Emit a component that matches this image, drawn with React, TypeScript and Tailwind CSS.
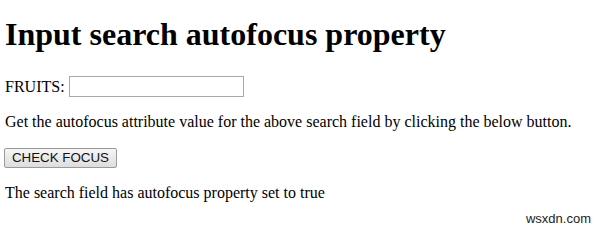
export default function App() {
  return (
    <div className="relative h-[233px] w-[600px] overflow-hidden bg-white pl-[5px] font-['Liberation_Serif',serif] text-black">
      <h1 className="mt-[16px] text-[32px] font-bold leading-[37px]">Input search autofocus property</h1>

      <div className="mt-[23px] flex h-[21px] items-center gap-[4px] text-[16px] leading-[18px]">
        <label htmlFor="fruits">FRUITS:</label>
        <input
          id="fruits"
          type="search"
          className="h-[21px] w-[175px] border border-[#a9a9a9] bg-white px-1 outline-none"
        />
      </div>

      <p className="mt-[16px] text-[16px] leading-[18px]">
        Get the autofocus attribute value for the above search field by clicking the below button.
      </p>

      <button className="-ml-[1px] mt-[17px] block h-[20px] w-[113px] rounded-[2px] border border-[#9a9a9a] bg-gradient-to-b from-[#f6f6f6] to-[#dddddd] font-['Liberation_Sans',sans-serif] text-[13.33px] leading-[18px] text-[#111]">
        CHECK FOCUS
      </button>

      <p className="mt-[16px] text-[16px] leading-[18px]">The search field has autofocus property set to true</p>

      <span className="absolute bottom-[5px] right-[9px] font-['Liberation_Sans',sans-serif] text-[13px] text-[#222]">
        wsxdn.com
      </span>
    </div>
  );
}
